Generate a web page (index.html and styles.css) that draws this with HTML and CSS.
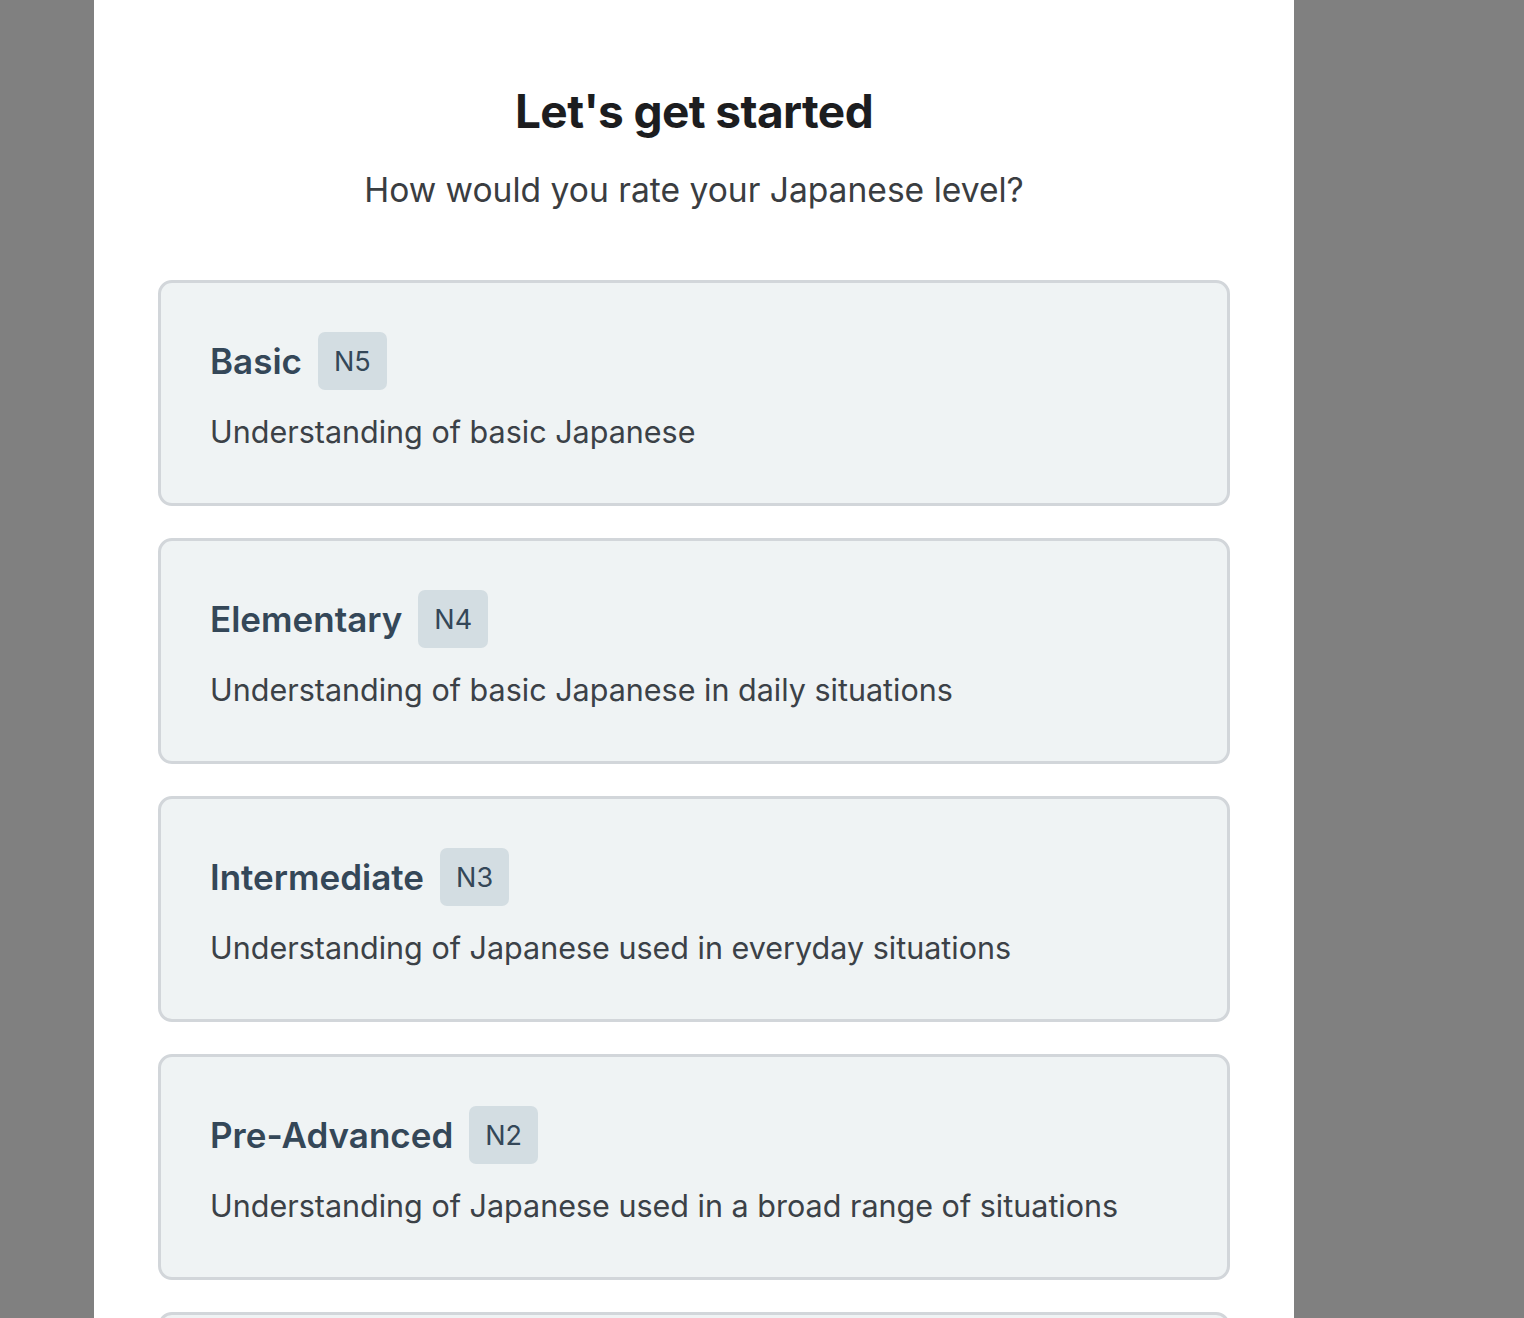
FILE: index.html
```html
<!DOCTYPE html>
<html lang="en">
<head>
<meta charset="utf-8">
<title>Let's get started</title>
<link rel="stylesheet" href="styles.css">
</head>
<body>
<div class="page">
  <main class="panel">
    <h1 class="title">Let's get started</h1>
    <p class="subtitle">How would you rate your Japanese level?</p>
    <div class="options">
      <div class="card">
        <div class="card-head"><span class="card-title">Basic</span><span class="badge">N5</span></div>
        <p class="card-desc">Understanding of basic Japanese</p>
      </div>
      <div class="card">
        <div class="card-head"><span class="card-title">Elementary</span><span class="badge">N4</span></div>
        <p class="card-desc">Understanding of basic Japanese in daily situations</p>
      </div>
      <div class="card">
        <div class="card-head"><span class="card-title">Intermediate</span><span class="badge">N3</span></div>
        <p class="card-desc">Understanding of Japanese used in everyday situations</p>
      </div>
      <div class="card">
        <div class="card-head"><span class="card-title">Pre-Advanced</span><span class="badge">N2</span></div>
        <p class="card-desc">Understanding of Japanese used in a broad range of situations</p>
      </div>
      <div class="card">
        <div class="card-head"><span class="card-title">Advanced</span><span class="badge">N1</span></div>
        <p class="card-desc">Understanding of Japanese used in a variety of circumstances</p>
      </div>
    </div>
  </main>
</div>
</body>
</html>
```

FILE: styles.css
```css
html, body {
  margin: 0;
  padding: 0;
  height: 100%;
}
body {
  background: #808080;
  font-family: Inter, "Noto Sans", "Liberation Sans", sans-serif;
  overflow: hidden;
}
.page {
  display: flex;
  justify-content: flex-start;
  padding-left: 94px;
  height: 1318px;
  overflow: hidden;
}
.panel {
  width: 1200px;
  box-sizing: border-box;
  background: #ffffff;
  padding: 82px 64px 0;
}
.title {
  margin: 0;
  text-align: center;
  font-size: 46px;
  line-height: 58px;
  font-weight: 700;
  color: #1c1d1f;
  letter-spacing: -0.6px;
}
.subtitle {
  margin: 26px 0 0;
  text-align: center;
  font-size: 33.6px;
  line-height: 48px;
  font-weight: 400;
  color: #3a3d41;
}
.options {
  margin-top: 66px;
  display: flex;
  flex-direction: column;
  gap: 32px;
}
.card {
  border: 3px solid #d2d6da;
  border-radius: 14px;
  background: #eff3f4;
  padding: 49px 49px 47px;
}
.card-head {
  display: flex;
  align-items: center;
  gap: 16px;
  height: 58px;
}
.card-title {
  font-size: 35px;
  font-weight: 600;
  color: #344758;
}
.badge {
  display: inline-flex;
  align-items: center;
  justify-content: center;
  height: 58px;
  padding: 0 16px;
  box-sizing: border-box;
  background: #d3dde2;
  border-radius: 7px;
  font-size: 27px;
  font-weight: 400;
  color: #344758;
}
.card-desc {
  margin: 18px 0 0;
  font-size: 30.5px;
  line-height: 48px;
  color: #3b4147;
}
```
